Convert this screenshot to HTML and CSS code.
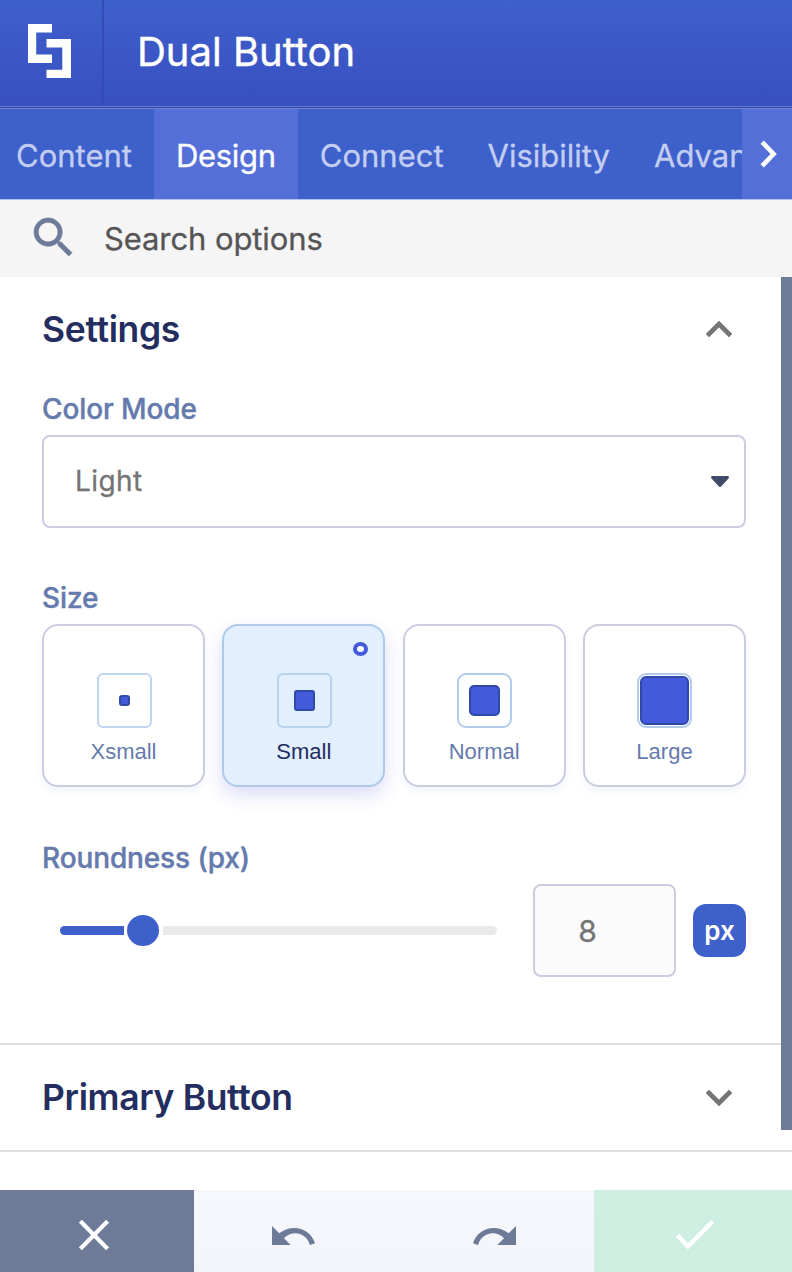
FILE: index.html
```
<!DOCTYPE html>
<html lang="en">
<head>
  <meta charset="UTF-8">
  <title>Dual Button</title>
  <link rel="stylesheet" href="styles.css">
</head>
<body>
  <div class="panel">
    <header class="header">
      <div class="logo">
        <svg viewBox="0 0 43 54" fill="#fff">
          <path d="M0 0h24v8.5H8.2v22H24V39H0z"/>
          <path d="M18.5 15H43v39H18.5v-8.3h15.8V23.5H18.5z"/>
        </svg>
      </div>
      <h1>Dual Button</h1>
    </header>

    <nav class="tabs">
      <div class="tab-list">
        <a class="tab">Content</a>
        <a class="tab active">Design</a>
        <a class="tab">Connect</a>
        <a class="tab">Visibility</a>
        <a class="tab">Advanced</a>
      </div>
      <button class="tab-next" aria-label="More tabs">
        <svg viewBox="0 0 18 28" fill="none" stroke="#fff" stroke-width="4.6"><path d="M2.2 2.2 13.6 14 2.2 25.8"/></svg>
      </button>
    </nav>

    <div class="search">
      <svg viewBox="3 3 17.49 17.49" fill="#6d7b98" stroke="#6d7b98" stroke-width=".3">
        <path d="M15.5 14h-.79l-.28-.27C15.41 12.59 16 11.11 16 9.5 16 5.91 13.09 3 9.5 3S3 5.91 3 9.5 5.91 16 9.5 16c1.61 0 3.09-.59 4.23-1.57l.27.28v.79l5 4.99L20.49 19l-4.99-5zm-6 0C7.01 14 5 11.99 5 9.5S7.01 5 9.5 5 14 7.01 14 9.5 11.99 14 9.5 14z"/>
      </svg>
      <span>Search options</span>
    </div>

    <main class="options">
      <div class="scroll">
        <section class="settings">
          <div class="section-head">
            <h2>Settings</h2>
            <svg class="chevron" viewBox="6 8 12 7.41"><path d="M12 8l-6 6 1.41 1.41L12 10.83l4.59 4.58L18 14z"/></svg>
          </div>

          <label class="label">Color Mode</label>
          <div class="select">
            <span>Light</span>
            <svg viewBox="0 0 18 11" fill="#414a68"><path d="M1.5 0h15c1.3 0 1.9 1.5 1 2.4l-7.4 8.1a1.5 1.5 0 0 1-2.2 0L.5 2.4C-.4 1.5.2 0 1.5 0z"/></svg>
          </div>

          <label class="label size-label">Size</label>
          <div class="sizes">
            <div class="size">
              <div class="frame thin"><i class="xs"></i></div>
              <span>Xsmall</span>
            </div>
            <div class="size selected">
              <b class="mark"></b>
              <div class="frame thin"><i class="sm"></i></div>
              <span>Small</span>
            </div>
            <div class="size">
              <div class="frame"><i class="md"></i></div>
              <span>Normal</span>
            </div>
            <div class="size">
              <div class="frame"><i class="lg"></i></div>
              <span>Large</span>
            </div>
          </div>

          <label class="label round-label">Roundness (px)</label>
          <div class="range">
            <div class="track">
              <div class="fill"></div>
              <div class="thumb"></div>
              <div class="rest"></div>
            </div>
            <div class="value">8</div>
            <div class="unit">px</div>
          </div>
        </section>

        <section class="collapsed">
          <h2>Primary Button</h2>
          <svg class="chevron" viewBox="6 8.59 12 7.41"><path d="M7.41 8.59L12 13.17l4.59-4.58L18 10l-6 6-6-6z"/></svg>
        </section>
      </div>
      <div class="scrollbar"></div>
    </main>

    <footer class="footer">
      <button class="cancel" aria-label="Cancel">
        <svg width="30" height="32" viewBox="0 0 30 32" fill="none" stroke="#fff" stroke-width="4.2"><path d="M1.4 2.2l27.2 27.6M28.6 2.2L1.4 29.8"/></svg>
      </button>
      <button class="undo" aria-label="Undo">
        <svg width="43" height="19" viewBox="0 0 43 19"><path d="M0 0V19H18.7L12 12.3C20 4 34 6 38 19L43 17.3C38 1.5 20-2.5 7.3 7.3z"/></svg>
      </button>
      <button class="redo" aria-label="Redo">
        <svg width="43" height="19" viewBox="0 0 43 19"><path d="M43 0V19H24.3L31 12.3C23 4 9 6 5 19L0 17.3C5 1.5 23-2.5 35.7 7.3z"/></svg>
      </button>
      <button class="save" aria-label="Save">
        <svg width="38" height="30" viewBox="0 0 38 30" fill="none" stroke="#fff" stroke-width="4.4"><path d="M1.4 15.2L12 26.4 36.6 1.6"/></svg>
      </button>
    </footer>
  </div>
</body>
</html>
```
FILE: styles.css
```
:root {
  --blue: #3e60cb;
  --blue-light: #546fd8;
  --slate: #6d7b98;
  --navy: #232d5f;
  --label: #657aad;
  --border: #cacde0;
}
* {
  box-sizing: border-box;
}
body {
  margin: 0;
  font-family: Inter, "Liberation Sans", sans-serif;
  background: #fff;
}
h1, h2 {
  margin: 0;
}
button {
  border: none;
  padding: 0;
  background: none;
}
svg {
  display: block;
  flex-shrink: 0;
}
.panel {
  width: 792px;
  height: 1272px;
  display: flex;
  flex-direction: column;
  overflow: hidden;
}

/* header */
.header {
  height: 109px;
  flex-shrink: 0;
  display: flex;
  background: linear-gradient(#3e60cb, #384fc0);
  border-bottom: 1px solid #6f83d4;
  box-shadow: inset 0 -1px #3346a8, inset 0 -2px #6678d0;
}
.logo {
  width: 104px;
  height: 106px;
  padding: 24px 0 0 28px;
  border-right: 2px solid #344bb7;
}
.logo svg {
  width: 43px;
  height: 54px;
}
.header h1 {
  font-size: 40px;
  font-weight: 400;
  -webkit-text-stroke: 0.4px;
  line-height: 104px;
  padding-left: 33px;
  color: #fff;
}

/* tabs */
.tabs {
  height: 90px;
  flex-shrink: 0;
  display: flex;
  background: var(--blue);
}
.tab-list {
  flex: 1;
  display: flex;
  overflow: hidden;
  margin-left: -6px;
}
.tab {
  padding: 0 22px;
  font-size: 31px;
  -webkit-text-stroke: 0.3px;
  line-height: 93px;
  color: #c3cef1;
}
.tab.active {
  letter-spacing: -0.3px;
  background: var(--blue-light);
  color: #fff;
}
.tab-next {
  width: 50px;
  padding-left: 18px;
  background: var(--blue-light);
}
.tab-next svg {
  width: 18px;
  height: 28px;
}

/* search */
.search {
  height: 78px;
  flex-shrink: 0;
  display: flex;
  align-items: center;
  padding: 0 34px;
  background: #f5f5f5;
  border-top: 1px solid #b4c1ec;
}
.search svg {
  width: 38px;
  height: 38px;
  margin-top: -3px;
  overflow: visible;
}
.search span {
  margin: 1px 0 0 32px;
  font-size: 31px;
  letter-spacing: -0.1px;
  -webkit-text-stroke: 0.3px;
  line-height: 40px;
  color: #565656;
}

/* options */
.options {
  height: 913px;
  flex-shrink: 0;
  display: flex;
}
.scroll {
  width: 792px;
  flex-shrink: 0;
}
.scrollbar {
  width: 11px;
  height: 853px;
  margin-left: -11px;
  background: var(--slate);
}
.settings {
  height: 768px;
  padding: 28px 46px 0 42px;
  border-bottom: 2px solid #dfdfdf;
}
.section-head {
  display: flex;
  align-items: center;
  justify-content: space-between;
  height: 48px;
  padding-right: 14px;
}
h2 {
  margin-top: 2px;
  font-size: 35.5px;
  font-weight: 600;
  letter-spacing: -0.35px;
  line-height: 48px;
  color: var(--navy);
}
.chevron {
  width: 26px;
  height: 16px;
  fill: #747474;
  stroke: #747474;
  stroke-width: 0.3px;
  overflow: visible;
}
.label {
  display: block;
  margin-top: 38px;
  font-size: 28px;
  font-weight: 500;
  letter-spacing: -0.12px;
  -webkit-text-stroke: 0.4px;
  line-height: 36px;
  color: var(--label);
}
.select {
  display: flex;
  align-items: center;
  justify-content: space-between;
  height: 93px;
  margin-top: 8px;
  padding: 0 15px 0 31px;
  border: 2px solid var(--border);
  border-radius: 8px;
  font-size: 28px;
  letter-spacing: 0.4px;
  -webkit-text-stroke: 0.3px;
  color: #747474;
}
.select span {
  margin-top: -2px;
}
.select svg {
  width: 18px;
  height: 11px;
}
.size-label {
  margin-top: 52px;
}
.sizes {
  display: grid;
  grid-template-columns: repeat(4, 163px);
  justify-content: space-between;
  margin-top: 8px;
}
.size {
  position: relative;
  display: flex;
  flex-direction: column;
  align-items: center;
  height: 163px;
  padding-top: 47px;
  border: 2px solid var(--border);
  border-radius: 16px;
  background: #fff;
  box-shadow: 0 5px 7px rgba(67, 90, 219, 0.06);
}
.size span {
  margin-top: 11px;
  font-family: "Liberation Sans", Arial, sans-serif;
  font-size: 22px;
  line-height: 26px;
  color: var(--label);
}
.size.selected {
  background: #e1efff;
  border-color: #aecaea;
  box-shadow: 0 8px 18px rgba(67, 70, 219, 0.19);
}
.size.selected span {
  color: var(--navy);
}
.mark {
  position: absolute;
  top: 16px;
  right: 15px;
  width: 15px;
  height: 14px;
  border: 4px solid #435adb;
  border-radius: 50%;
  background: #fff;
}
.frame {
  display: flex;
  align-items: center;
  justify-content: center;
  width: 55px;
  height: 55px;
  margin-left: 1px;
  border: 2px solid #b0cbec;
  border-radius: 9px;
}
.frame.thin {
  border-color: #c0d6ef;
  border-radius: 6px;
}
.selected .frame.thin {
  border-color: #b9d1ec;
}
.frame i {
  background: #435adb;
  border: 2px solid #3049a8;
}
.xs {
  width: 11px;
  height: 11px;
  border-radius: 3px;
}
.sm {
  width: 21px;
  height: 21px;
  border-radius: 3px;
}
.md {
  width: 31px;
  height: 31px;
  border-radius: 5px;
}
.lg {
  width: 49px;
  height: 49px;
  border-radius: 6px;
}
.round-label {
  margin-top: 53px;
}
.range {
  display: flex;
  align-items: center;
  margin-top: 8px;
  padding-left: 18px;
}
.track {
  display: flex;
  align-items: center;
  width: 437px;
}
.fill {
  width: 64px;
  height: 9px;
  border-radius: 5px 0 0 5px;
  background: var(--blue);
}
.thumb {
  width: 32px;
  height: 31px;
  margin: 0 4px 0 3px;
  border-radius: 50%;
  background: var(--blue);
}
.rest {
  flex: 1;
  height: 9px;
  border-radius: 0 5px 5px 0;
  background: #e9e9e9;
}
.value {
  width: 143px;
  height: 93px;
  margin: 0 17px 0 36px;
  padding-right: 34px;
  border: 2px solid var(--border);
  border-radius: 8px;
  background: #fbfbfb;
  font-size: 30px;
  -webkit-text-stroke: 0.3px;
  line-height: 91px;
  text-align: center;
  color: #747474;
}
.unit {
  width: 53px;
  height: 53px;
  border-radius: 13px;
  background: var(--blue);
  font-size: 26px;
  font-weight: 600;
  line-height: 53px;
  text-align: center;
  color: #fff;
}
.collapsed {
  display: flex;
  align-items: center;
  justify-content: space-between;
  height: 107px;
  padding: 0 60px 0 42px;
  border-bottom: 2px solid #dfdfdf;
}
.collapsed h2 {
  margin-top: 0;
}

/* footer */
.footer {
  height: 82px;
  flex-shrink: 0;
  display: flex;
  background: linear-gradient(#f7f8fd, #f4f5fa);
}
.footer button {
  display: flex;
  align-items: center;
  justify-content: center;
  padding-top: 8px;
}
.footer .cancel {
  width: 194px;
  padding: 8px 6px 0 0;
  background: var(--slate);
}
.undo, .redo {
  width: 200px;
  fill: var(--slate);
}
.footer .undo {
  padding-right: 2px;
}
.footer .redo {
  padding-left: 1px;
}
.footer .save {
  width: 198px;
  padding-left: 3px;
  background: #cdeee1;
}
```
